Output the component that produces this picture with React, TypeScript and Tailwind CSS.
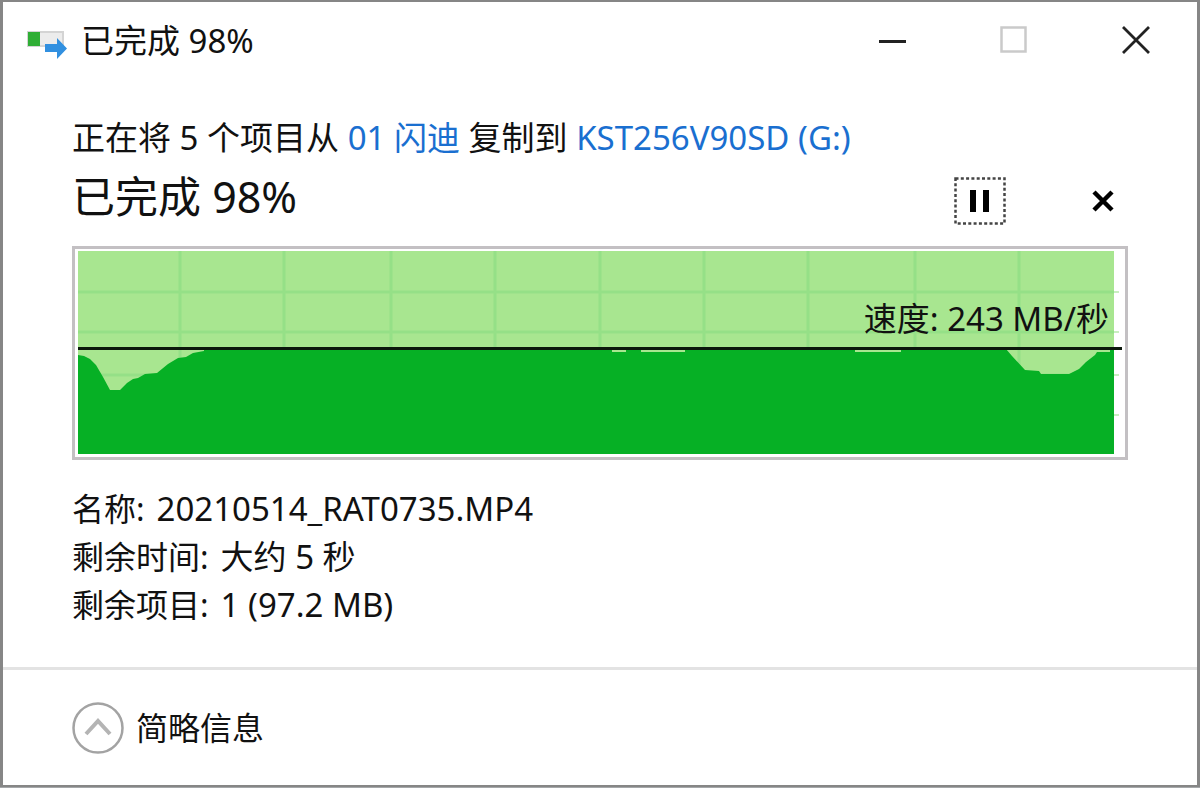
import React, { useState } from "react";

interface Detail {
  label: string;
  value: string;
}

const details: Detail[] = [
  { label: "名称:", value: "20210514_RAT0735.MP4" },
  { label: "剩余时间:", value: "大约 5 秒" },
  { label: "剩余项目:", value: "1 (97.2 MB)" },
];

const gridColumns = [105, 209, 316, 420, 525, 629, 733, 840, 944];
const gridRows = [43, 83, 126, 166];

const CopyIcon: React.FC = () => (
  <svg className="mt-2" width="40" height="28" viewBox="0 0 40 28" aria-hidden="true">
    <rect x="0" y="0" width="37" height="16" fill="#d4d4d4" />
    <rect x="13" y="2" width="22" height="12" fill="#ececec" />
    <rect x="1" y="1" width="12" height="14" fill="#2fae35" />
    <path d="M18 13h12V7l10 10.500L30 28v-7H18z" fill="#3190e0" />
  </svg>
);

const TitleBar: React.FC<{ title: string }> = ({ title }) => (
  <header className="flex h-[76px] items-center justify-between pl-6">
    <div className="flex items-center gap-[14px] pt-[2px]">
      <CopyIcon />
      <h1 className="text-[33px] leading-[48px]">{title}</h1>
    </div>
    <div className="flex self-stretch">
      <button aria-label="最小化" className="flex w-[122px] items-center justify-center">
        <svg width="28" height="28" viewBox="0 0 28 28">
          <path d="M1 15.500h27" stroke="#222" strokeWidth="3" />
        </svg>
      </button>
      <button aria-label="最大化" disabled className="flex w-[122px] items-center justify-center">
        <svg width="28" height="28" viewBox="0 0 28 28" fill="none">
          <rect x="1.500" y="1.500" width="24" height="24" stroke="#cacaca" strokeWidth="2.500" />
        </svg>
      </button>
      <button aria-label="关闭" className="flex w-[122px] items-center justify-center">
        <svg width="28" height="28" viewBox="0 0 28 28">
          <path d="M1 1l26 26M27 1L1 27" stroke="#222" strokeWidth="2.800" />
        </svg>
      </button>
    </div>
  </header>
);

const SpeedChart: React.FC<{ speed: string }> = ({ speed }) => (
  <div className="relative mt-[21px] border-[3px] border-[#c3c0c3] bg-white">
    <svg
      className="block h-[208px] w-full"
      viewBox="0 0 1050 208"
      preserveAspectRatio="none"
      aria-hidden="true"
    >
      {gridRows.map((y) => (
        <path key={y} d={`M1039 ${y}h5`} stroke="#c9efc0" strokeWidth="2" />
      ))}
      <rect x="3" y="2" width="1036" height="203" fill="#a8e690" />
      {gridRows.map((y) => (
        <path key={y} d={`M3 ${y}h1036`} stroke="#95e087" strokeWidth="3" />
      ))}
      {gridColumns.map((x) => (
        <path key={x} d={`M${x} 2v203`} stroke="#95e087" strokeWidth="3" />
      ))}
      {/* throughput history */}
      <path
        d="M3 205V106L9 107L15 110L21 116L28 128L35 141H45L52 134L58 130L63 129L70 125L82 124L93 115L103 109L111 108L118 104L129 102V100H537V103H551V100H566V103H610V100H780V103H826V100H931L937 107L950 121L964 122L966 125H994L1004 120L1011 113L1020 106L1022 103H1035V100H1039V205Z"
        fill="#06b025"
      />
      <rect x="3" y="98" width="1044" height="3" fill="#0c180c" />
    </svg>
    <p className="absolute top-[46px] right-4 text-[33px] leading-[48px]">速度: {speed}</p>
  </div>
);

export default function App() {
  const [paused, setPaused] = useState(false);
  const [expanded, setExpanded] = useState(true);

  return (
    <div className="flex min-h-screen flex-col bg-[#a5a8aa] pb-px font-['Noto_Sans','Noto_Sans_CJK_SC',sans-serif] text-[#111]">
      <div className="flex flex-1 flex-col border-[3px] border-t-2 border-b-2 border-[#868686] bg-white">
        <TitleBar title="已完成 98%" />

        <main className="flex-1 px-[69px] pt-9 pb-9">
          <p className="text-[33px] leading-[48px]">
            正在将 5 个项目从{" "}
            <a href="#source" className="text-[#1a6fd0]">
              01 闪迪
            </a>{" "}
            复制到{" "}
            <a href="#target" className="text-[#1a6fd0]">
              KST256V90SD (G:)
            </a>
          </p>

          <div className="mt-[11px] flex items-start justify-between">
            <h2 className="text-[43px] leading-[48px]">已完成 98%</h2>
            <div className="flex items-center gap-[72px] pt-1">
              <button
                aria-label={paused ? "继续" : "暂停"}
                onClick={() => setPaused(!paused)}
                className="flex h-12 w-[52px] items-center justify-center"
              >
                <svg width="52" height="48" viewBox="0 0 52 48" fill="none">
                  <rect
                    x="1.500"
                    y="1.500"
                    width="49"
                    height="45"
                    stroke="#444"
                    strokeWidth="2.500"
                    strokeDasharray="3 2.300"
                  />
                  {paused ? (
                    <path d="M18 13l18 11-18 11z" fill="#000" />
                  ) : (
                    <path d="M16 13h6v22h-6zM29 13h6v22h-6z" fill="#000" />
                  )}
                </svg>
              </button>
              <button aria-label="取消" className="flex h-12 w-[50px] items-center justify-center">
                <svg width="22" height="22" viewBox="0 0 22 22">
                  <path d="M2 2l18 18M20 2L2 20" stroke="#000" strokeWidth="4.500" />
                </svg>
              </button>
            </div>
          </div>

          <SpeedChart speed="243 MB/秒" />

          {expanded && (
            <dl className="mt-[25px] leading-[48px]">
              {details.map((detail) => (
                <div key={detail.label} className="flex items-baseline gap-3">
                  <dt className="text-[32px]">{detail.label}</dt>
                  <dd className="text-[33px]">{detail.value}</dd>
                </div>
              ))}
            </dl>
          )}
        </main>

        <footer className="border-t-[3px] border-[#e3e3e3] px-[69px] pt-8 pb-[31px]">
          <button
            aria-expanded={expanded}
            onClick={() => setExpanded(!expanded)}
            className="flex items-center gap-3 text-[32px] leading-[48px]"
          >
            <svg width="52" height="52" viewBox="0 0 52 52" fill="none">
              <circle cx="26" cy="26" r="24.500" stroke="#a3a3a3" strokeWidth="2.500" />
              <path
                d={expanded ? "M14 32l12-13 12 13" : "M14 20l12 13 12-13"}
                stroke="#b4b4b4"
                strokeWidth="4"
              />
            </svg>
            {expanded ? "简略信息" : "详细信息"}
          </button>
        </footer>
      </div>
    </div>
  );
}
